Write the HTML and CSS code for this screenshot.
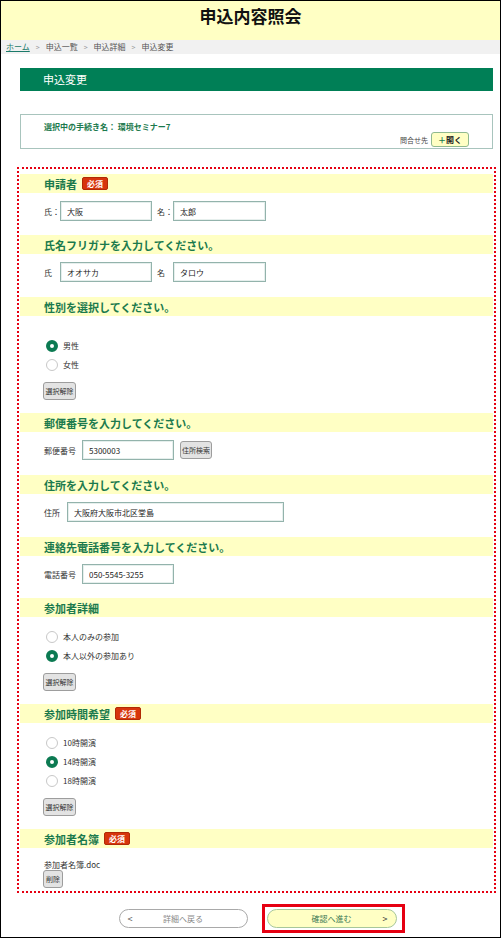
FILE: index.html
```html
<!DOCTYPE html>
<html lang="ja">
<head>
<meta charset="UTF-8" />
<title>申込内容照会</title>
<meta name="viewport" content="width=device-width, initial-scale=1" />
<link rel="stylesheet" href="styles.css">
</head>
<body>
<div class="page">
  <!-- HEADER -->
  <header class="site-head">
    <h1>申込内容照会</h1>
  </header>
  <nav class="crumbs">
    <a href="#">ホーム</a><span class="sep">&gt;</span>申込一覧<span class="sep">&gt;</span>申込詳細<span class="sep">&gt;</span>申込変更
  </nav>

  <main class="content">
    <h2 class="page-bar">申込変更</h2>

    <div class="proc-box">
      <p class="proc-name">選択中の手続き名：&nbsp;環境セミナー7</p>
      <div class="contact">
        <span>問合せ先</span>
        <button type="button" class="open-btn"><span class="plus">＋</span>開く</button>
      </div>
    </div>

    <!-- FORM -->
    <form class="form-area">
      <section class="field">
        <h3 class="field-head">申請者<span class="req">必須</span></h3>
        <div class="field-body row first">
          <label class="lbl w16">氏：</label><input class="text w92" value="大阪">
          <label class="lbl w16 gap">名：</label><input class="text w93" value="太郎">
        </div>
      </section>

      <section class="field">
        <h3 class="field-head">氏名フリガナを入力してください。</h3>
        <div class="field-body row">
          <label class="lbl w16">氏</label><input class="text w92" value="オオサカ">
          <label class="lbl w16 gap">名</label><input class="text w93" value="タロウ">
        </div>
      </section>

      <section class="field">
        <h3 class="field-head">性別を選択してください。</h3>
        <div class="field-body choice spaced">
          <label class="radio-row"><input type="radio" name="sex" checked>男性</label>
          <label class="radio-row"><input type="radio" name="sex">女性</label>
          <button type="button" class="sub-btn clear">選択解除</button>
        </div>
      </section>

      <section class="field">
        <h3 class="field-head">郵便番号を入力してください。</h3>
        <div class="field-body row">
          <label class="lbl w38">郵便番号</label><input class="text w92" value="5300003">
          <button type="button" class="sub-btn zip">住所検索</button>
        </div>
      </section>

      <section class="field">
        <h3 class="field-head">住所を入力してください。</h3>
        <div class="field-body row">
          <label class="lbl w23">住所</label><input class="text w217" value="大阪府大阪市北区堂島">
        </div>
      </section>

      <section class="field">
        <h3 class="field-head">連絡先電話番号を入力してください。</h3>
        <div class="field-body row first">
          <label class="lbl w38">電話番号</label><input class="text w92" value="050-5545-3255">
        </div>
      </section>

      <section class="field">
        <h3 class="field-head">参加者詳細</h3>
        <div class="field-body choice">
          <label class="radio-row"><input type="radio" name="member">本人のみの参加</label>
          <label class="radio-row"><input type="radio" name="member" checked>本人以外の参加あり</label>
          <button type="button" class="sub-btn clear">選択解除</button>
        </div>
      </section>

      <section class="field">
        <h3 class="field-head">参加時間希望<span class="req">必須</span></h3>
        <div class="field-body choice">
          <label class="radio-row"><input type="radio" name="time">10時開演</label>
          <label class="radio-row"><input type="radio" name="time" checked>14時開演</label>
          <label class="radio-row"><input type="radio" name="time">18時開演</label>
          <button type="button" class="sub-btn clear">選択解除</button>
        </div>
      </section>

      <section class="field">
        <h3 class="field-head">参加者名簿<span class="req">必須</span></h3>
        <div class="field-body last">
          <p class="file-name">参加者名簿.doc</p>
          <button type="button" class="sub-btn del">削除</button>
        </div>
      </section>
    </form>

    <div class="nav-buttons">
      <button type="button" class="pill back"><span class="arr">&lt;</span><span>詳細へ戻る</span><span></span></button>
      <div class="focus-frame">
        <button type="button" class="pill next"><span></span><span>確認へ進む</span><span class="arr">&gt;</span></button>
      </div>
    </div>
  </main>
</div>
</body>
</html>
```

FILE: styles.css
```css
:root {
  --green: #007f56;
  --text-green: #1b7a4d;
  --yellow: #ffffc4;
  --red: #e60012;
  --font: "Noto Sans CJK JP", "Noto Sans", sans-serif;
}

* {
  box-sizing: border-box;
}

html,
body {
  margin: 0;
  padding: 0;
  font-family: var(--font);
  color: #222;
  background: #fff;
}

.page {
  width: 501px;
  height: 938px;
  border: 1px solid #000;
  overflow: hidden;
}

/* ------------ HEADER ------------- */
.site-head {
  height: 39px;
  background: var(--yellow);
  display: flex;
  justify-content: center;
  padding-top: 3px;
}
.site-head h1 {
  margin: 0;
  font-size: 17px;
  line-height: 24px;
  font-weight: bold;
  color: #111;
}

.crumbs {
  height: 14px;
  line-height: 14px;
  background: #f1f1f1;
  font-size: 8px;
  color: #555;
  padding-left: 5px;
}
.crumbs a {
  color: #1b7a6a;
}
.crumbs .sep {
  color: #999;
  margin: 0 6px;
  font-size: 7px;
}

/* ------------ CONTENT ------------- */
.content {
  padding: 0 7px 0 19px;
}

.page-bar {
  margin: 14px 0 0;
  height: 23px;
  line-height: 23px;
  background: var(--green);
  color: #fff;
  font-size: 11px;
  font-weight: normal;
  padding-left: 23px;
}

.proc-box {
  margin-top: 23px;
  height: 35px;
  border: 1px solid #a8c4bd;
  padding: 6px 23px 0 23px;
}
.proc-name {
  margin: 0;
  font-size: 8px;
  line-height: 12px;
  font-weight: bold;
  color: var(--text-green);
}
.contact {
  display: flex;
  justify-content: flex-end;
  align-items: center;
  gap: 3px;
  font-size: 7px;
  color: #444;
  margin-top: -1px;
}
.open-btn {
  height: 15px;
  width: 38px;
  padding: 0;
  background: var(--yellow);
  border: 1px solid #8fb98f;
  border-radius: 3px;
  font-family: var(--font);
  font-size: 8px;
  font-weight: bold;
  color: #222;
}
.open-btn .plus {
  color: var(--text-green);
}

/* ------------ FORM ------------- */
.form-area {
  margin: 18px -3px 0;
  border: 2px dotted var(--red);
  padding: 5px 1px 0;
}

.field-head {
  margin: 0;
  height: 19px;
  background: var(--yellow);
  display: flex;
  align-items: center;
  padding-left: 24px;
  font-size: 11px;
  font-weight: bold;
  color: var(--text-green);
}
.req {
  margin-left: 5px;
  height: 13px;
  line-height: 12px;
  padding: 0 4px;
  background: #d7350c;
  border: 1px solid #b02a05;
  border-radius: 2px;
  color: #fff;
  font-size: 8px;
  font-weight: bold;
}

.field-body {
  padding: 8px 0 15px 24px;
  font-size: 8px;
}
.field-body.first {
  padding-bottom: 14px;
}
.field-body.choice {
  padding: 10px 0 13px 24px;
}
.field-body.spaced {
  padding-top: 20px;
}
.field-body.last {
  padding: 11px 0 3px 24px;
}
.field-body.row {
  display: flex;
  align-items: center;
}

.lbl {
  font-size: 8px;
  color: #333;
}
.lbl.gap { margin-left: 5px; }
.w16 { width: 16px; }
.w23 { width: 23px; }
.w38 { width: 38px; }

input.text {
  height: 20px;
  border: 1px solid #93b3ac;
  box-shadow: inset 0 0 0 1px #e6efed;
  padding: 0 6px;
  font-family: var(--font);
  font-size: 8px;
  color: #222;
  outline: none;
}
.w92 { width: 92px; }
.w93 { width: 93px; }
.w217 { width: 217px; }

.radio-row {
  display: flex;
  align-items: center;
  height: 19px;
  font-size: 8px;
  color: #333;
}
.radio-row input {
  appearance: none;
  margin: 0 5px 0 2px;
  width: 12px;
  height: 12px;
  border: 1px solid #c8c8c8;
  border-radius: 50%;
  background: #fff;
}
.radio-row input:checked {
  border: 4px solid #0c7a52;
}

.sub-btn {
  display: block;
  padding: 0;
  background: #e3e3e3;
  border: 1px solid #9d9d9d;
  border-radius: 3px;
  font-family: var(--font);
  font-size: 7px;
  color: #333;
}
.sub-btn.clear {
  margin: 8px 0 0 -1px;
  width: 33px;
  height: 18px;
}
.sub-btn.zip {
  margin-left: 6px;
  width: 32px;
  height: 18px;
}
.sub-btn.del {
  margin: -1px 0 0 -1px;
  width: 20px;
  height: 18px;
}

.file-name {
  margin: 0;
  font-size: 8px;
  line-height: 12px;
  color: #333;
}

/* ------------ BOTTOM NAV ------------- */
.nav-buttons {
  display: flex;
  justify-content: center;
  align-items: center;
  gap: 14px;
  margin-top: 11px;
  padding-left: 10px;
}
.pill {
  display: grid;
  grid-template-columns: 1fr auto 1fr;
  align-items: center;
  width: 129px;
  height: 19px;
  padding: 0 8px;
  border-radius: 10px;
  font-family: var(--font);
  font-size: 8px;
}
.pill .arr { font-size: 9px; }
.pill.back {
  background: #fff;
  border: 1px solid #a9a9a9;
  color: #888;
}
.pill.back .arr { text-align: left; color: #555; }
.pill.next {
  width: 130px;
  background: var(--yellow);
  border: 1px solid #a7c79a;
  color: #3d7a55;
}
.pill.next .arr { text-align: right; color: #333; }

.focus-frame {
  border: 3px solid var(--red);
  padding: 2px 5px 2px 2px;
}
```
